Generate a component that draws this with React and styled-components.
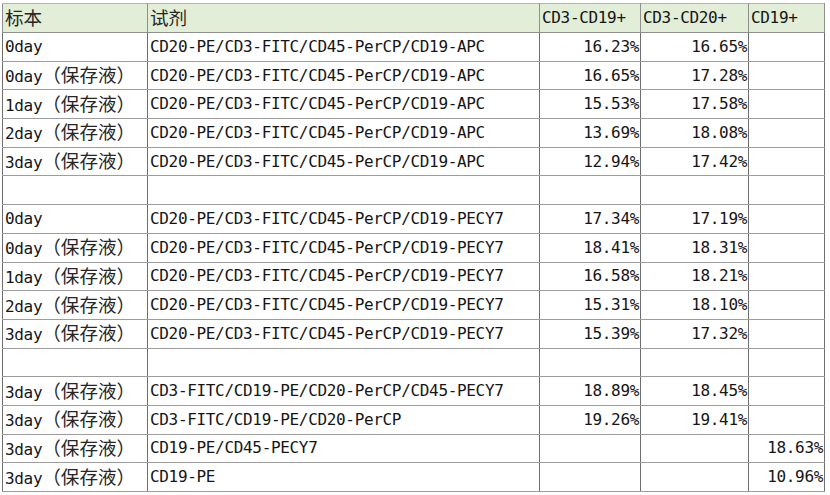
import React from "react";
import styled, { createGlobalStyle } from "styled-components";

const Global = createGlobalStyle`
  html, body { margin: 0; padding: 0; background: #ffffff; }
  #root { width: 830px; height: 495px; overflow: hidden; }
`;

const Page = styled.div`
  padding: 3px 0 0 2px;
`;

const Table = styled.table`
  border-collapse: collapse;
  table-layout: fixed;
  width: 822px;
  font-family: "DejaVu Sans Mono", "Liberation Mono", monospace;
  font-size: 16px;
  line-height: 20px;
  letter-spacing: -0.33px;
  color: #151515;
`;

const Row = styled.tr`
  height: ${(p) => (p.$head ? "29px" : "28.7px")};
`;

const HeadCell = styled.th`
  background: #e2eed8;
  font-weight: normal;
  text-align: left;
  padding: 0 0 0 2px;
  border: 1px solid #8f8f8f;
  border-top-color: #b4b4b4;
  white-space: nowrap;
  vertical-align: middle;
`;

const Cell = styled.td`
  text-align: ${(p) => (p.$num ? "right" : "left")};
  padding: ${(p) => (p.$num ? "0 1px 0 0" : "0 0 0 2px")};
  border-top: 1px solid #9c9c9c;
  border-bottom: 1px solid #9c9c9c;
  border-left: 1px solid #6e6e6e;
  border-right: 1px solid #6e6e6e;
  white-space: nowrap;
  vertical-align: middle;
`;

const Cjk = styled.span`
  font-family: "Noto Sans CJK SC", sans-serif;
  font-size: 18.6px;
  line-height: 20px;
  letter-spacing: 0;
  color: #262626;
`;

const renderText = (s) =>
  s.split(/([\u3000-\u9fff\uff00-\uffef]+)/).map((part, i) =>
    /[\u3000-\u9fff\uff00-\uffef]/.test(part) ? <Cjk key={i}>{part}</Cjk> : part
  );

const R1 = "CD20-PE/CD3-FITC/CD45-PerCP/CD19-APC";
const R2 = "CD20-PE/CD3-FITC/CD45-PerCP/CD19-PECY7";
const K = "（保存液）";

const rows = [
  ["0day", R1, "16.23%", "16.65%", ""],
  ["0day" + K, R1, "16.65%", "17.28%", ""],
  ["1day" + K, R1, "15.53%", "17.58%", ""],
  ["2day" + K, R1, "13.69%", "18.08%", ""],
  ["3day" + K, R1, "12.94%", "17.42%", ""],
  ["", "", "", "", ""],
  ["0day", R2, "17.34%", "17.19%", ""],
  ["0day" + K, R2, "18.41%", "18.31%", ""],
  ["1day" + K, R2, "16.58%", "18.21%", ""],
  ["2day" + K, R2, "15.31%", "18.10%", ""],
  ["3day" + K, R2, "15.39%", "17.32%", ""],
  ["", "", "", "", ""],
  ["3day" + K, "CD3-FITC/CD19-PE/CD20-PerCP/CD45-PECY7", "18.89%", "18.45%", ""],
  ["3day" + K, "CD3-FITC/CD19-PE/CD20-PerCP", "19.26%", "19.41%", ""],
  ["3day" + K, "CD19-PE/CD45-PECY7", "", "", "18.63%"],
  ["3day" + K, "CD19-PE", "", "", "10.96%"],
];

const widths = [145, 392, 101, 108, 76];
const headers = ["标本", "试剂", "CD3-CD19+", "CD3-CD20+", "CD19+"];

export default function App() {
  return (
    <>
      <Global />
      <Page>
        <Table>
          <colgroup>
            {widths.map((w, i) => (
              <col key={i} style={{ width: w }} />
            ))}
          </colgroup>
          <thead>
            <Row $head>
              {headers.map((h, i) => (
                <HeadCell key={i}>{renderText(h)}</HeadCell>
              ))}
            </Row>
          </thead>
          <tbody>
            {rows.map((r, ri) => (
              <Row key={ri}>
                <Cell>{r[0] ? renderText(r[0]) : "\u00a0"}</Cell>
                <Cell>{r[1] || "\u00a0"}</Cell>
                <Cell $num>{r[2]}</Cell>
                <Cell $num>{r[3]}</Cell>
                <Cell $num>{r[4]}</Cell>
              </Row>
            ))}
          </tbody>
        </Table>
      </Page>
    </>
  );
}
